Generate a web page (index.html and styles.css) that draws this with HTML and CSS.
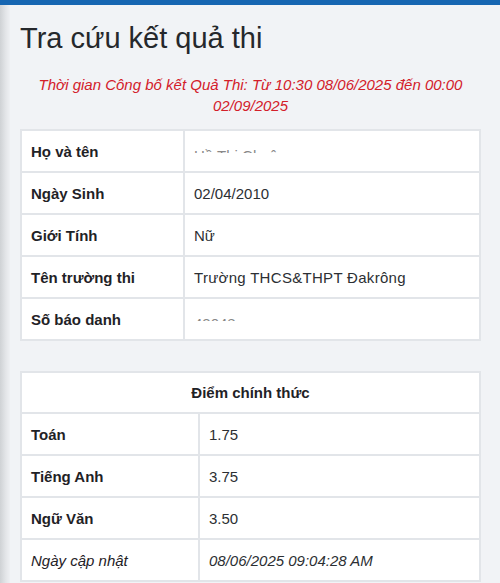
FILE: index.html
```html
<!DOCTYPE html>
<html lang="vi">
<head>
<meta charset="utf-8">
<link rel="stylesheet" href="styles.css">
</head>
<body>
<div class="topbar"></div>
<div class="page">
  <div class="shade"></div>
  <main class="content">
    <h1 class="title">Tra cứu kết quả thi</h1>
    <p class="notice">Thời gian Công bố kết Quả Thi: Từ 10:30 08/06/2025 đến 00:00 02/09/2025</p>
    <table class="info">
      <tr><th>Họ và tên</th><td><span class="masked">Hồ Thị Chuân</span></td></tr>
      <tr><th>Ngày Sinh</th><td>02/04/2010</td></tr>
      <tr><th>Giới Tính</th><td>Nữ</td></tr>
      <tr><th>Tên trường thi</th><td class="wide">Trường THCS&amp;THPT Đakrông</td></tr>
      <tr><th>Số báo danh</th><td><span class="masked">43048</span></td></tr>
    </table>
    <table class="scores">
      <tr><th colspan="2" class="head">Điểm chính thức</th></tr>
      <tr><th>Toán</th><td>1.75</td></tr>
      <tr><th>Tiếng Anh</th><td>3.75</td></tr>
      <tr><th>Ngữ Văn</th><td>3.50</td></tr>
      <tr class="updated"><th>Ngày cập nhật</th><td>08/06/2025 09:04:28 AM</td></tr>
    </table>
  </main>
</div>
</body>
</html>
```
FILE: styles.css
```css
html, body {
  margin: 0;
  padding: 0;
  background: #f1f3f6;
  font-family: "Liberation Sans", Arial, sans-serif;
  color: #222;
}
.topbar {
  height: 5px;
  background: #1666b2;
}
.page {
  display: flex;
  min-height: 578px;
}
.shade {
  width: 10px;
  flex: none;
  background: linear-gradient(to right, #cfd2d5, #e4e6e9 60%, #eef0f3);
}
.content {
  flex: 1;
  padding: 0 19px 0 10px;
}
.title {
  margin: 15px 0 0 0;
  font-size: 29px;
  font-weight: normal;
  color: #25282c;
  line-height: 36px;
}
.notice {
  margin: 18px 0 0 0;
  text-align: center;
  font-style: italic;
  color: #d3202a;
  font-size: 15px;
  line-height: 21px;
}
table {
  width: 100%;
  border-collapse: collapse;
  background: #fff;
  font-size: 15px;
}
th, td {
  border: 2px solid #e2e5e9;
  height: 40px;
  padding: 0 9px;
  text-align: left;
  vertical-align: middle;
}
th {
  font-weight: bold;
  color: #1f2226;
}
td {
  color: #2c2f33;
}
td.wide {
  letter-spacing: 0.3px;
}
.info {
  margin-top: 13px;
}
.info th {
  width: 143px;
}
.scores {
  margin-top: 30px;
}
.scores th {
  width: 158px;
}
.scores th.head {
  text-align: center;
  width: auto;
  height: 39px;
}
.scores .updated th,
.scores .updated td {
  font-style: italic;
  font-weight: normal;
}
.masked {
  display: inline-block;
  height: 6px;
  overflow: hidden;
  vertical-align: 4px;
  line-height: 18px;
  color: #888;
}
```
